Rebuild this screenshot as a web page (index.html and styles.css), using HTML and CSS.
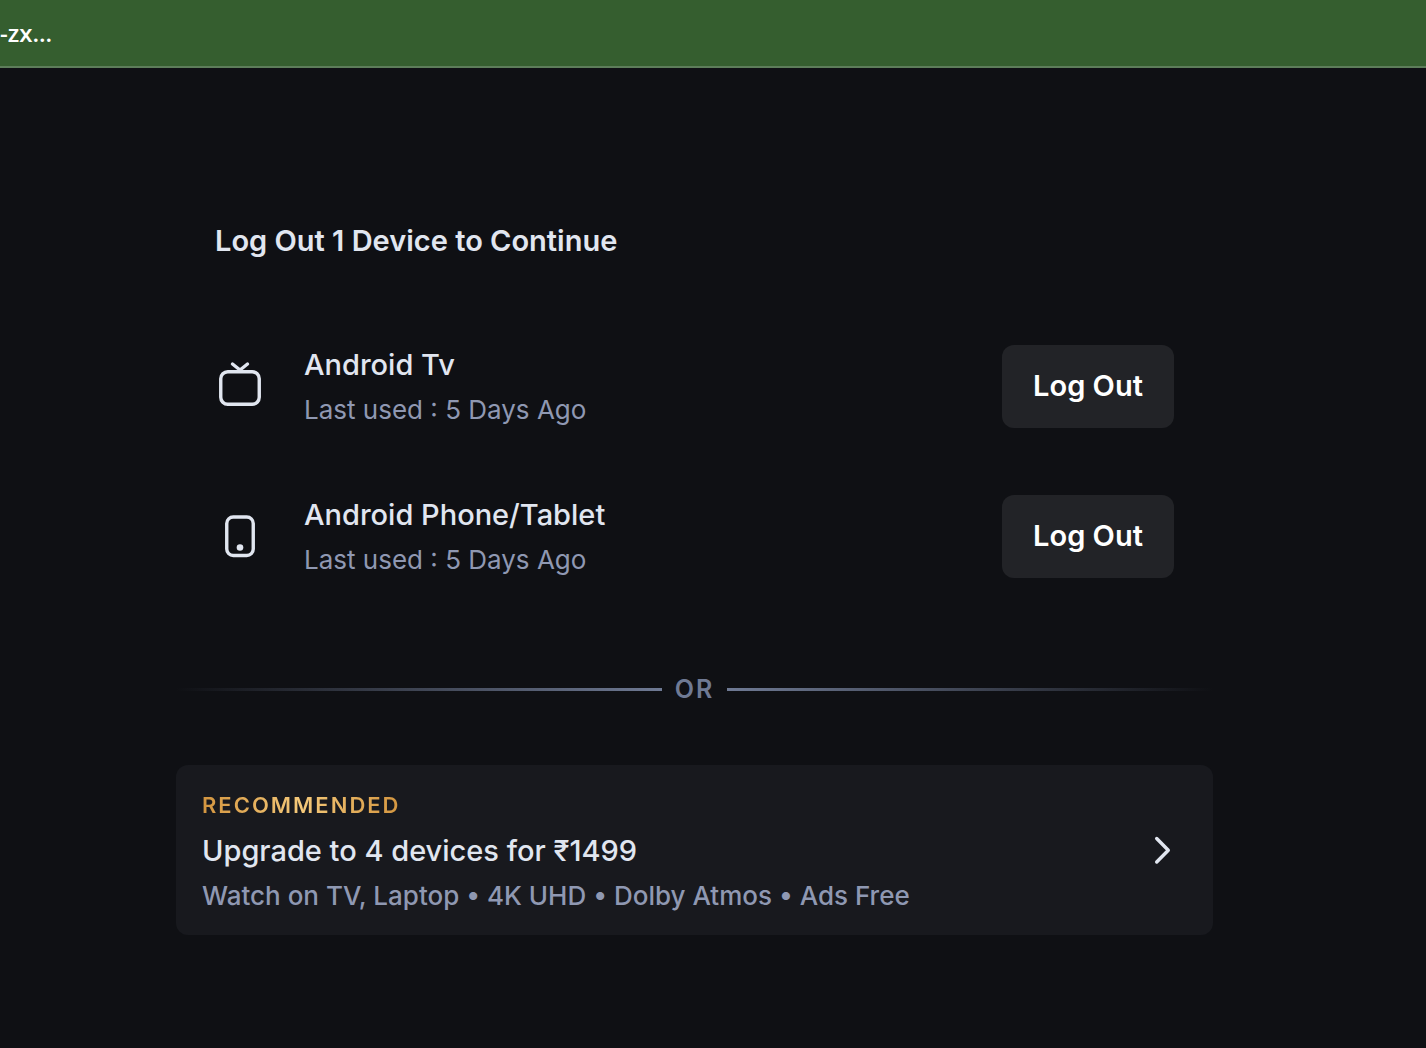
FILE: index.html
```
<!DOCTYPE html>
<html lang="en">
<head>
<meta charset="utf-8">
<title>Manage devices</title>
<link rel="stylesheet" href="styles.css">
</head>
<body>
<header class="topbar">-zx...</header>
<main class="page">
  <section class="devices">
    <h1 class="title">Log Out 1 Device to Continue</h1>
    <ul class="device-list">
      <li class="device">
        <svg class="device-icon" viewBox="0 0 52 52" aria-hidden="true"><rect x="5.75" y="11.75" width="38.5" height="32.5" rx="7"/><path d="M17.5 4l7.5 6 7.5-6"/></svg>
        <div class="info">
          <h2 class="name">Android Tv</h2>
          <p class="meta">Last used : 5 Days Ago</p>
        </div>
        <button class="logout" type="button">Log Out</button>
      </li>
      <li class="device">
        <svg class="device-icon" viewBox="0 0 52 52" aria-hidden="true"><rect x="11.75" y="7" width="26.5" height="38.5" rx="6.5"/><circle class="dot" cx="25" cy="37.5" r="3.3"/></svg>
        <div class="info">
          <h2 class="name">Android Phone/Tablet</h2>
          <p class="meta">Last used : 5 Days Ago</p>
        </div>
        <button class="logout" type="button">Log Out</button>
      </li>
    </ul>
  </section>
  <div class="divider"><span>OR</span></div>
  <a class="upgrade" href="#upgrade">
    <span class="offer">
      <span class="badge">RECOMMENDED</span>
      <span class="name">Upgrade to 4 devices for ₹1499</span>
      <span class="perks">Watch on TV, Laptop • 4K UHD • Dolby Atmos • Ads Free</span>
    </span>
    <svg class="chevron" viewBox="0 0 24 32" aria-hidden="true"><path d="M6.7 4.5l11.6 11.8L6.7 28"/></svg>
  </a>
</main>
</body>
</html>
```
FILE: styles.css
```
* { box-sizing: border-box; margin: 0; padding: 0; }
body {
  min-height: 100vh;
  background: #0f1014;
  color: #e1e6f0;
  font-family: Inter, sans-serif;
}
.topbar {
  height: 68px;
  border-bottom: 2px solid #5d7d5a;
  background: #355e2f;
  color: #fff;
  font-family: "Open Sans", sans-serif;
  font-size: 24px;
  font-weight: 600;
  line-height: 66px;
}
.page {
  width: calc(100% - 389px);
  margin-left: 176px;
  padding-top: 153px;
}
.devices { padding: 0 39px; }
.title { font-size: 29px; font-weight: 600; line-height: 40px; }
.device-list { margin-top: 76px; list-style: none; }
.device { display: flex; align-items: center; height: 98px; }
.device + .device { margin-top: 52px; }
.device-icon {
  width: 52px;
  height: 52px;
  fill: none;
  stroke: #e1e6f0;
  stroke-width: 3.4;
  stroke-linecap: round;
  stroke-linejoin: round;
}
.dot { fill: #e1e6f0; stroke: none; }
.info { flex: 1; margin-left: 37px; }
.name { font-size: 29px; font-weight: 500; line-height: 48px; }
.meta, .perks { color: #8f98b2; font-size: 26px; line-height: 42px; }
.perks { font-weight: 500; }
.logout {
  width: 172px;
  height: 83px;
  border: 0;
  border-radius: 12px;
  background: #222327;
  color: #fff;
  font: 600 29px/40px Inter, sans-serif;
}
.divider {
  display: flex;
  align-items: center;
  gap: 13px;
  margin-top: 84px;
  color: #6f7a94;
  font-size: 25px;
  font-weight: 600;
  line-height: 40px;
  letter-spacing: 2px;
}
.divider::before, .divider::after {
  content: "";
  flex: 1;
  height: 3px;
  background: linear-gradient(to right, transparent, #6f7a94);
}
.divider::after { background: linear-gradient(to left, transparent, #6f7a94); }
.upgrade {
  display: flex;
  align-items: center;
  justify-content: space-between;
  height: 170px;
  margin-top: 56px;
  padding: 0 39px 0 26px;
  border-radius: 12px;
  background: #18191e;
  color: inherit;
  text-decoration: none;
}
.offer { display: flex; flex-direction: column; align-items: flex-start; }
.badge {
  background: linear-gradient(to right, #d3953f, #f5c97a, #d3953f);
  background-clip: text;
  color: transparent;
  font-size: 22px;
  font-weight: 600;
  line-height: 44px;
  letter-spacing: 2px;
}
.chevron { width: 24px; height: 32px; fill: none; stroke: #e1e6f0; stroke-width: 3.4; stroke-linecap: round; stroke-linejoin: round; }
```
